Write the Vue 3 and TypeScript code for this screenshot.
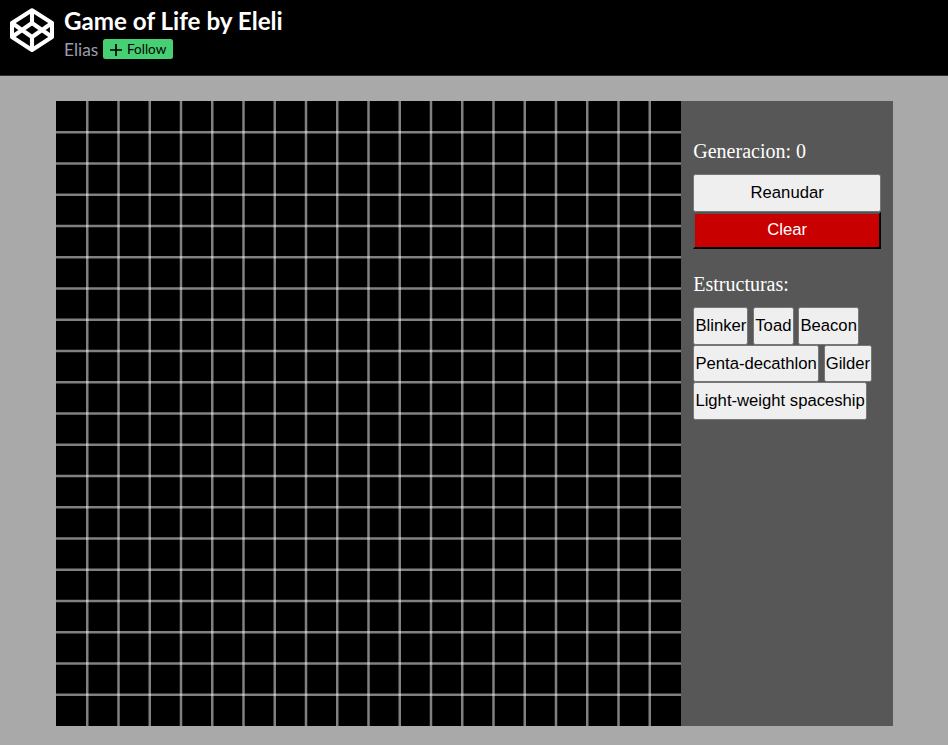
<script setup lang="ts">
import { ref } from 'vue'

const generation = ref<number>(0)
const cells = 20
const cellSize = 31.25
const boardSize = cells * cellSize
const lines: number[] = Array.from({ length: cells - 1 }, (_, i) => (i + 1) * cellSize)
const rows: string[][] = [
  ['Blinker', 'Toad', 'Beacon'],
  ['Penta-decathlon', 'Gilder'],
  ['Light-weight spaceship'],
]
</script>

<template>
  <div class="page">
    <header class="header">
      <svg class="logo" viewBox="0 0 44 44" fill="none" stroke="#fff" stroke-width="4.1" stroke-linejoin="round">
        <path d="M22 2.3 L42 15 V29 L22 42 L2 29 V15 Z" />
        <path d="M22 2 V15 M22 29 V42 M2 15 L22 29 L42 15 M2 29 L22 15 L42 29" />
      </svg>
      <div class="meta">
        <h1 class="title">Game of Life by Eleli</h1>
        <div class="author">
          <span class="name">Elias</span>
          <button class="follow">
            <svg class="plus" viewBox="0 0 12 12" stroke="#000" stroke-width="1.7"><path d="M6 0V12M0 6H12" /></svg>
            <span>Follow</span>
          </button>
        </div>
      </div>
    </header>
    <main class="main">
      <svg class="board" :viewBox="`0 0 ${boardSize} ${boardSize}`">
        <g class="lines">
          <line v-for="p in lines" :key="`v${p}`" :x1="p" y1="0" :x2="p" :y2="boardSize" />
          <line v-for="p in lines" :key="`h${p}`" x1="0" :y1="p" :x2="boardSize" :y2="p" />
        </g>
      </svg>
      <aside class="panel">
        <p class="label">Generacion: {{ generation }}</p>
        <button class="btn wide">Reanudar</button>
        <button class="btn wide clear">Clear</button>
        <p class="label second">Estructuras:</p>
        <div v-for="(row, i) in rows" :key="i" class="row">
          <button v-for="name in row" :key="name" class="btn">{{ name }}</button>
        </div>
      </aside>
    </main>
  </div>
</template>

<style>
body {
  background: #a9a9a9;
  overflow: hidden;
}
</style>

<style scoped>
.page {
  height: 745px;
  background: #a9a9a9;
}
.header {
  box-sizing: border-box;
  height: 76px;
  display: flex;
  padding: 8px 10px;
  gap: 10px;
  background: #000;
  border-bottom: 1px solid #2c2c2e;
  font-family: Lato, sans-serif;
}
.logo {
  width: 44px;
  height: 44px;
  flex: none;
}
.title {
  margin: -1px 0 0;
  font-size: 24.2px;
  line-height: 28px;
  font-weight: 700;
  color: #fff;
  white-space: nowrap;
}
.author {
  display: flex;
  align-items: center;
  gap: 5px;
  height: 20px;
  margin-top: 4px;
}
.name {
  width: 34px;
  font-size: 17.3px;
  line-height: 20px;
  padding-top: 2px;
  color: #9b9dad;
}
.follow {
  box-sizing: border-box;
  display: flex;
  align-items: center;
  gap: 5px;
  width: 70px;
  height: 20px;
  padding: 0 0 0 7px;
  border: 0;
  border-radius: 2.5px;
  background: #47cf73;
  color: #000;
  font-family: Lato, sans-serif;
  font-size: 13.5px;
  line-height: 20px;
}
.plus {
  width: 12px;
  height: 12px;
  margin-top: 1px;
  flex: none;
}
.main {
  display: flex;
  width: 837px;
  height: 625px;
  margin: 25px 0 0 56px;
}
.board {
  width: 625px;
  height: 625px;
  flex: none;
  background: #000;
}
.lines {
  stroke: #fff;
  stroke-opacity: 0.5;
  stroke-width: 2.5;
}
.panel {
  box-sizing: border-box;
  width: 212px;
  padding: 38px 12px 0 12.3px;
  background: #575757;
}
.label {
  margin: 0 0 11.4px;
  height: 24px;
  font-family: "Liberation Serif", serif;
  font-size: 20px;
  line-height: 24px;
  color: #fff;
}
.label.second {
  margin: 22.4px 0 11.7px;
}
.row {
  display: flex;
  gap: 4.8px;
}
.btn {
  box-sizing: border-box;
  height: 37.5px;
  padding: 0 1.1px;
  border: 1px solid #767676;
  border-radius: 2.5px;
  background: #efefef;
  color: #000;
  font-family: "Liberation Sans", sans-serif;
  font-size: 16.67px;
  white-space: nowrap;
}
.wide {
  display: block;
  width: 100%;
}
.clear {
  padding-bottom: 1.5px;
  border: 2px outset #000;
  border-radius: 0;
  background: #c80000;
  color: #fff;
}
</style>
